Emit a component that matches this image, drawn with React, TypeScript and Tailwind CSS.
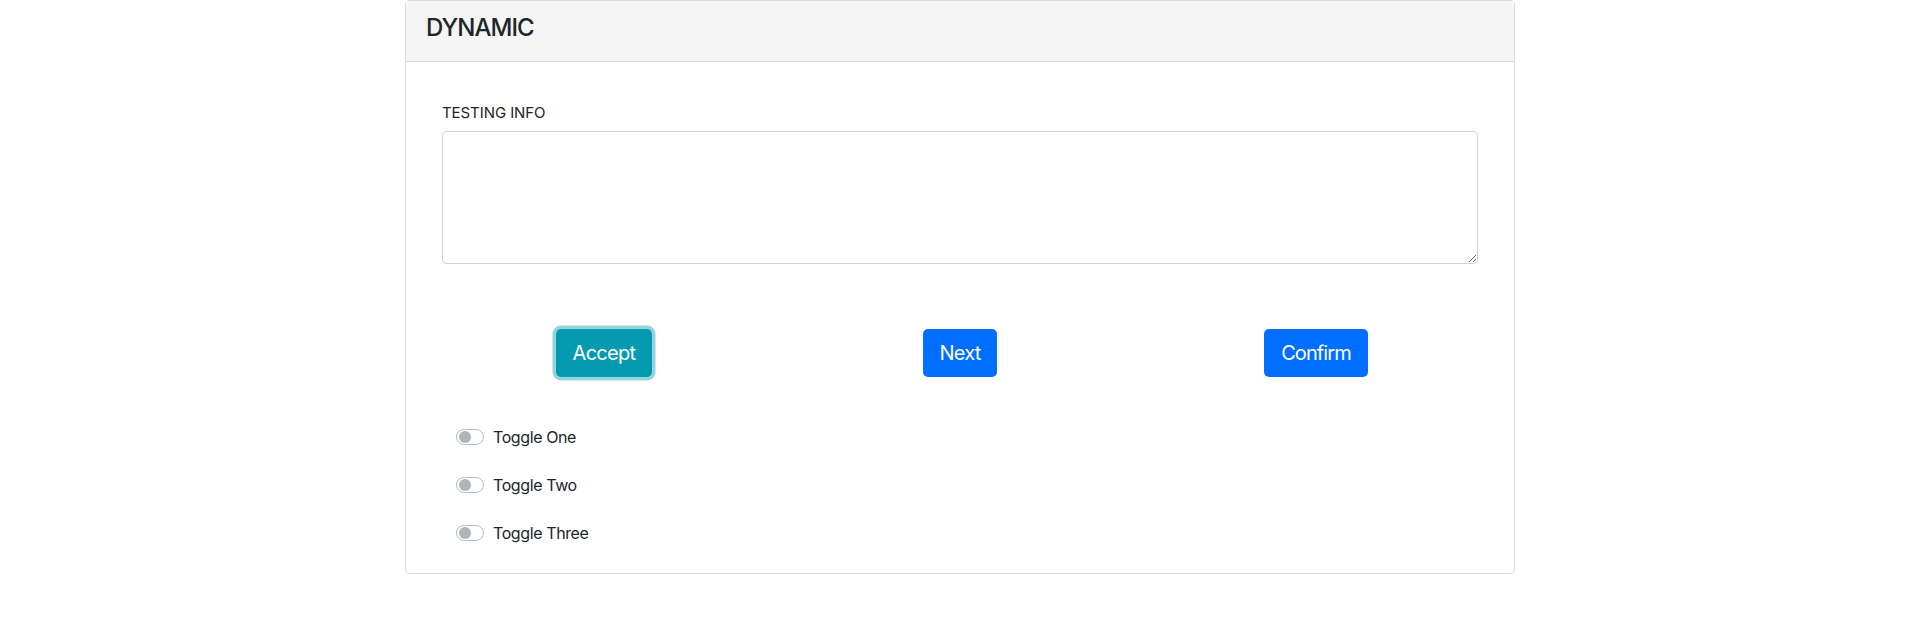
import React from "react";

function Toggle({ label }: { label: string }) {
  return (
    <div className="flex h-[24px] items-center">
      <div className="flex h-[16px] w-[28px] items-center rounded-full border border-[#b8bec5] bg-white pl-[2px]">
        <div className="h-[12px] w-[12px] rounded-full bg-[#adb5bd]" />
      </div>
      <span className="ml-[9px] text-[16px] leading-[24px] tracking-[-0.025em] text-[#212529]">{label}</span>
    </div>
  );
}

export default function App() {
  return (
    <div
      className="flex w-full justify-center bg-white"
      style={{ fontFamily: "Inter, 'Liberation Sans', Arial, sans-serif" }}
    >
      <div className="w-[1110px] overflow-hidden rounded-[4px] border border-[#dcdcdc] bg-white">
        <div className="h-[61px] border-b border-[#d4d4d4] bg-[#f5f5f5] px-[20px] pt-[13px]">
          <h4 className="text-[24px] font-medium leading-[28.8px] tracking-[-0.04em] text-[#212529]">DYNAMIC</h4>
        </div>
        <div className="px-[20px] pt-[20px] pb-[28px]">
          <div className="px-[16px] pt-[20px]">
            <label className="mb-[8px] block text-[15px] leading-[21px] tracking-[-0.005em] text-[#212529]">TESTING INFO</label>
            <textarea className="block h-[133px] w-full rounded-[4px] border border-[#ced4da] bg-white outline-none" />
          </div>
          <div className="mt-[65px] grid grid-cols-3">
            <div className="flex justify-center">
              <button className="h-[48px] w-[96px] rounded-[5px] bg-[#049bb0] text-[20px] leading-[30px] tracking-[-0.035em] text-white shadow-[0_0_0_3.5px_rgba(58,176,195,0.55)]">
                Accept
              </button>
            </div>
            <div className="flex justify-center">
              <button className="h-[48px] w-[74px] rounded-[5px] bg-[#006eff] text-[20px] leading-[30px] tracking-[-0.04em] text-white">
                Next
              </button>
            </div>
            <div className="flex justify-center">
              <button className="h-[48px] w-[104px] rounded-[5px] bg-[#006eff] text-[20px] leading-[30px] tracking-[-0.045em] text-white">
                Confirm
              </button>
            </div>
          </div>
          <div className="mt-[48px] flex flex-col gap-[24px] pl-[30px]">
            <Toggle label="Toggle One" />
            <Toggle label="Toggle Two" />
            <Toggle label="Toggle Three" />
          </div>
        </div>
      </div>
    </div>
  );
}
